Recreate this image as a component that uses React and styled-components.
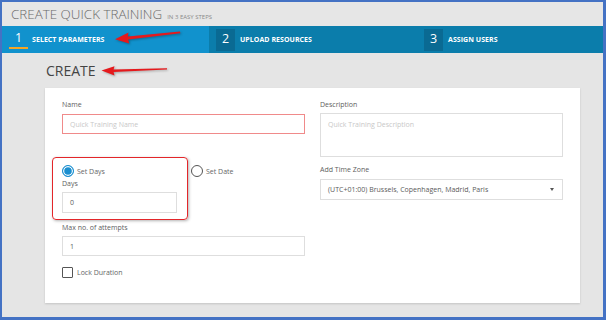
import React from "react";
import styled, { createGlobalStyle } from "styled-components";

const GlobalStyle = createGlobalStyle`
  html, body {
    margin: 0;
    padding: 0;
    background: #ffffff;
  }
  body {
    font-family: "Open Sans", "Liberation Sans", sans-serif;
  }
`;

const Frame = styled.div`
  position: relative;
  box-sizing: border-box;
  width: 606px;
  height: 320px;
  border-style: solid;
  border-color: #4472c4;
  border-width: 2px 3px 3px 2px;
  background: #e5e5e5;
  display: flex;
  flex-direction: column;
  overflow: hidden;
`;

const TitleBar = styled.div`
  height: 24px;
  display: flex;
  align-items: baseline;
  padding: 3px 0 0 9px;
  box-sizing: border-box;
  background: #e6e6e6;
`;

const Title = styled.span`
  font-size: 13.4px;
  font-weight: 300;
  color: #6a6a6a;
  line-height: 18px;
`;

const SubTitle = styled.span`
  margin-left: 5px;
  font-size: 6px;
  color: #8a8a8a;
`;

const StepBar = styled.div`
  height: 27px;
  display: flex;
  background: #0b7dab;
`;

const Step = styled.div`
  display: flex;
  align-items: center;
  box-sizing: border-box;
  width: ${(props) => props.width};
  padding-left: 7px;
  background: ${(props) => (props.active ? "#1192cd" : "#0b7dab")};
`;

const StepNum = styled.div`
  box-sizing: border-box;
  width: 19px;
  height: 22px;
  margin-top: 1px;
  display: flex;
  align-items: center;
  justify-content: center;
  padding-bottom: 2px;
  font-size: 12.5px;
  color: #ffffff;
  background: ${(props) => (props.active ? "transparent" : "#0a6a93")};
  border-bottom: 2px solid
    ${(props) => (props.active ? "#f5a623" : "#0a6a93")};
  ${(props) => props.active && "height: 19px; margin-top: -1px;"}
`;

const StepLabel = styled.span`
  margin-left: ${(props) => (props.active ? "4px" : "5px")};
  font-size: 7px;
  font-weight: 700;
  color: #ffffff;
  letter-spacing: 0.05px;
`;

const Content = styled.div`
  flex: 1;
  padding: 8px 23px 0 43px;
  display: flex;
  flex-direction: column;
`;

const Heading = styled.h1`
  margin: 0 0 7px 1px;
  font-size: 14px;
  font-weight: 400;
  line-height: 20px;
  color: #444444;
`;

const Card = styled.div`
  position: relative;
  box-sizing: border-box;
  height: 215px;
  background: #ffffff;
  box-shadow: 0 1px 2px rgba(0, 0, 0, 0.15);
  padding: 12px 17px 0 17px;
  display: grid;
  grid-template-columns: 243px 243px;
  column-gap: 15px;
  align-items: start;
`;

const Column = styled.div`
  display: flex;
  flex-direction: column;
`;

const Label = styled.label`
  display: block;
  font-size: 7px;
  line-height: 10px;
  color: #606060;
  margin-top: ${(props) => props.top || 0}px;
  margin-bottom: ${(props) => props.bottom || 3}px;
`;

const Field = styled.div`
  box-sizing: border-box;
  width: ${(props) => props.width || "100%"};
  height: ${(props) => props.height || 20}px;
  border: 1px solid ${(props) => (props.error ? "#f08a8a" : "#dedede")};
  padding: ${(props) => (props.multiline ? "6px 0 0 7px" : "0 7px")};
  display: flex;
  align-items: ${(props) => (props.multiline ? "flex-start" : "center")};
  justify-content: space-between;
  font-size: 7px;
  color: ${(props) => (props.placeholder ? "#c8c8c8" : "#5a5a5a")};
`;

const Caret = styled.span`
  width: 0;
  height: 0;
  margin-right: 1px;
  border-left: 2.5px solid transparent;
  border-right: 2.5px solid transparent;
  border-top: 3px solid #555555;
`;

const RadioRow = styled.div`
  display: flex;
  margin-top: 31px;
  height: 12px;
`;

const RadioOption = styled.div`
  display: flex;
  align-items: center;
  width: ${(props) => props.width || "auto"};
  font-size: 7px;
  color: #666666;
`;

const RadioDot = styled.span`
  box-sizing: border-box;
  width: 12px;
  height: 12px;
  margin-right: 3px;
  border-radius: 50%;
  border: 1px solid ${(props) => (props.checked ? "#1a8fd0" : "#555555")};
  background: ${(props) => (props.checked ? "#1a8fd0" : "#ffffff")};
  box-shadow: ${(props) => (props.checked ? "inset 0 0 0 1.2px #ffffff" : "none")};
`;

const CheckRow = styled.div`
  display: flex;
  align-items: center;
  margin-top: 11px;
  font-size: 7px;
  color: #666666;
`;

const CheckBox = styled.span`
  box-sizing: border-box;
  width: 11px;
  height: 11px;
  margin-right: 4px;
  border: 1px solid #555555;
  border-radius: 1px;
`;

const Highlight = styled.div`
  position: absolute;
  left: 7px;
  top: 69px;
  width: 136px;
  height: 63px;
  box-sizing: border-box;
  border: 1.5px solid #e3262a;
  border-radius: 4px;
  box-shadow: 1px 1px 3px rgba(0, 0, 0, 0.3);
  pointer-events: none;
`;

const Arrows = styled.svg`
  position: absolute;
  left: -2px;
  top: -2px;
  width: 606px;
  height: 320px;
  pointer-events: none;
  filter: drop-shadow(1px 1px 1px rgba(0, 0, 0, 0.3));
`;

const steps = [
  { num: 1, label: "SELECT PARAMETERS", width: "207px", active: true },
  { num: 2, label: "UPLOAD RESOURCES", width: "208px" },
  { num: 3, label: "ASSIGN USERS", width: "186px" },
];

export default function App() {
  return (
    <>
      <GlobalStyle />
      <Frame>
        <TitleBar>
          <Title>CREATE QUICK TRAINING</Title>
          <SubTitle>IN 3 EASY STEPS</SubTitle>
        </TitleBar>
        <StepBar>
          {steps.map((s) => (
            <Step key={s.num} width={s.width} active={s.active}>
              <StepNum active={s.active}>{s.num}</StepNum>
              <StepLabel active={s.active}>{s.label}</StepLabel>
            </Step>
          ))}
        </StepBar>
        <Content>
          <Heading>CREATE</Heading>
          <Card>
            <Column>
              <Label bottom={4}>Name</Label>
              <Field error placeholder>
                Quick Training Name
              </Field>
              <RadioRow>
                <RadioOption width="129px">
                  <RadioDot checked />
                  Set Days
                </RadioOption>
                <RadioOption>
                  <RadioDot />
                  Set Date
                </RadioOption>
              </RadioRow>
              <Label top={2}>Days</Label>
              <Field width="115px" height={21}>
                0
              </Field>
              <Label top={10}>Max no. of attempts</Label>
              <Field>1</Field>
              <CheckRow>
                <CheckBox />
                Lock Duration
              </CheckRow>
            </Column>
            <Column>
              <Label>Description</Label>
              <Field multiline placeholder height={44}>
                Quick Training Description
              </Field>
              <Label top={8} bottom={4}>
                Add Time Zone
              </Label>
              <Field height={21}>
                (UTC+01:00) Brussels, Copenhagen, Madrid, Paris
                <Caret />
              </Field>
            </Column>
            <Highlight />
          </Card>
        </Content>
        <Arrows viewBox="0 0 606 320">
          <polygon
            fill="#e5191c"
            points="115,39.3 128.5,32.6 127.8,36.4 180,31.6 180.3,33.2 128.2,39.6 129.2,43.5"
          />
          <polygon
            fill="#e5191c"
            points="101.5,70.5 114.5,66.2 113.6,69.5 167,68.2 167,69.6 113.6,71.9 114.5,75.4"
          />
        </Arrows>
      </Frame>
    </>
  );
}
